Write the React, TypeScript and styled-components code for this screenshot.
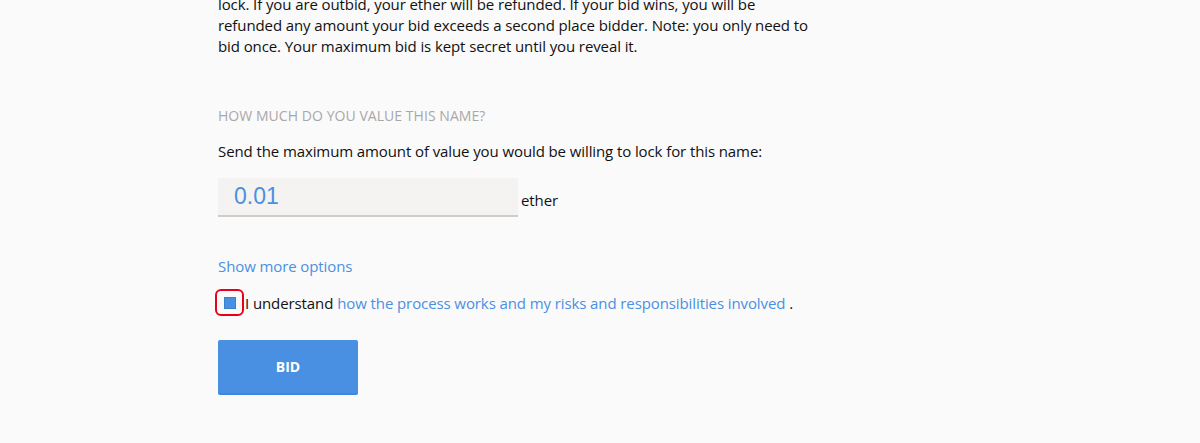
import React from "react";
import styled, { createGlobalStyle } from "styled-components";

const Global = createGlobalStyle`
  html, body { margin: 0; padding: 0; background: #fafafa; }
  body { font-family: "Open Sans", "Liberation Sans", sans-serif; color: #111; overflow: hidden; }
`;

const Page = styled.div`
  width: 1200px;
  height: 443px;
  overflow: hidden;
  background: #fafafa;
`;

const Content = styled.main`
  width: 590px;
  margin: -39px 0 0 218px;
  display: flex;
  flex-direction: column;
  font-size: 15px;
  letter-spacing: -0.1px;
`;

const Heading = styled.h1`
  margin: 0 0 -7px 0;
  font-family: "Open Sans", "Liberation Sans", sans-serif;
  font-weight: 400;
  font-size: 30px;
  line-height: 40px;
  letter-spacing: 0;
  color: #7a7a7a;
  white-space: nowrap;
`;

const Paragraph = styled.p`
  margin: 0;
  line-height: 21px;
  color: #111;
`;

const Label = styled.h3`
  margin: 49px 0 0 0;
  font-size: 14px;
  line-height: 20px;
  font-weight: 400;
  letter-spacing: 0.05px;
  text-transform: uppercase;
  color: #a8a8a8;
`;

const Text = styled.p`
  margin: 15px 0 0 0;
  line-height: 20px;
  color: #111;
`;

const InputRow = styled.div`
  margin-top: 17px;
  display: flex;
  align-items: flex-end;
  gap: 3px;
`;

const ValueInput = styled.input`
  width: 300px;
  height: 39px;
  box-sizing: border-box;
  border: none;
  border-bottom: 2px solid #cfcccc;
  background: #f4f3f2;
  padding: 0 16px;
  font-family: "Liberation Sans", Arial, sans-serif;
  font-size: 23px;
  color: #4a90e2;
  outline: none;
`;

const Unit = styled.span`
  line-height: 20px;
  padding-bottom: 7px;
`;

const MoreLink = styled.a`
  margin-top: 39px;
  line-height: 20px;
  color: #4a90e2;
  text-decoration: none;
  align-self: flex-start;
`;

const CheckRow = styled.label`
  margin-top: 13px;
  display: flex;
  align-items: center;
  line-height: 20px;
`;

const CheckRing = styled.span`
  width: 25px;
  height: 23px;
  border: 2px solid #e8001c;
  border-radius: 6px;
  display: flex;
  align-items: center;
  justify-content: center;
  margin: 0 1px 0 -3px;
`;

const CheckBox = styled.span`
  width: 12px;
  height: 12px;
  background: #4a90e2;
  border: 1px solid #3b7fd0;
  box-sizing: border-box;
`;

const InlineLink = styled.a`
  color: #4a90e2;
  text-decoration: none;
  margin: 0 4px;
`;

const BidButton = styled.button`
  margin-top: 24px;
  width: 140px;
  height: 55px;
  border: none;
  border-bottom: 2px solid #3d87df;
  border-radius: 2px;
  background: #4a90e2;
  color: #fff;
  font-family: "Open Sans", "Liberation Sans", sans-serif;
  font-weight: 700;
  font-size: 14px;
  text-transform: uppercase;
  align-self: flex-start;
  cursor: pointer;
`;

export default function App() {
  return (
    <Page>
      <Global />
      <Content>
        <Heading>Cryptographic sealed bidding</Heading>
        <Paragraph>
          lock. If you are outbid, your ether will be refunded. If your bid wins, you will be refunded any
          amount your bid exceeds a second place bidder. Note: you only need to bid once. Your maximum bid
          is kept secret until you reveal it.
        </Paragraph>
        <Label>How much do you value this name?</Label>
        <Text>Send the maximum amount of value you would be willing to lock for this name:</Text>
        <InputRow>
          <ValueInput defaultValue="0.01" />
          <Unit>ether</Unit>
        </InputRow>
        <MoreLink href="#">Show more options</MoreLink>
        <CheckRow>
          <CheckRing>
            <CheckBox />
          </CheckRing>
          I understand
          <InlineLink href="#">how the process works and my risks and responsibilities involved</InlineLink>.
        </CheckRow>
        <BidButton>Bid</BidButton>
      </Content>
    </Page>
  );
}
